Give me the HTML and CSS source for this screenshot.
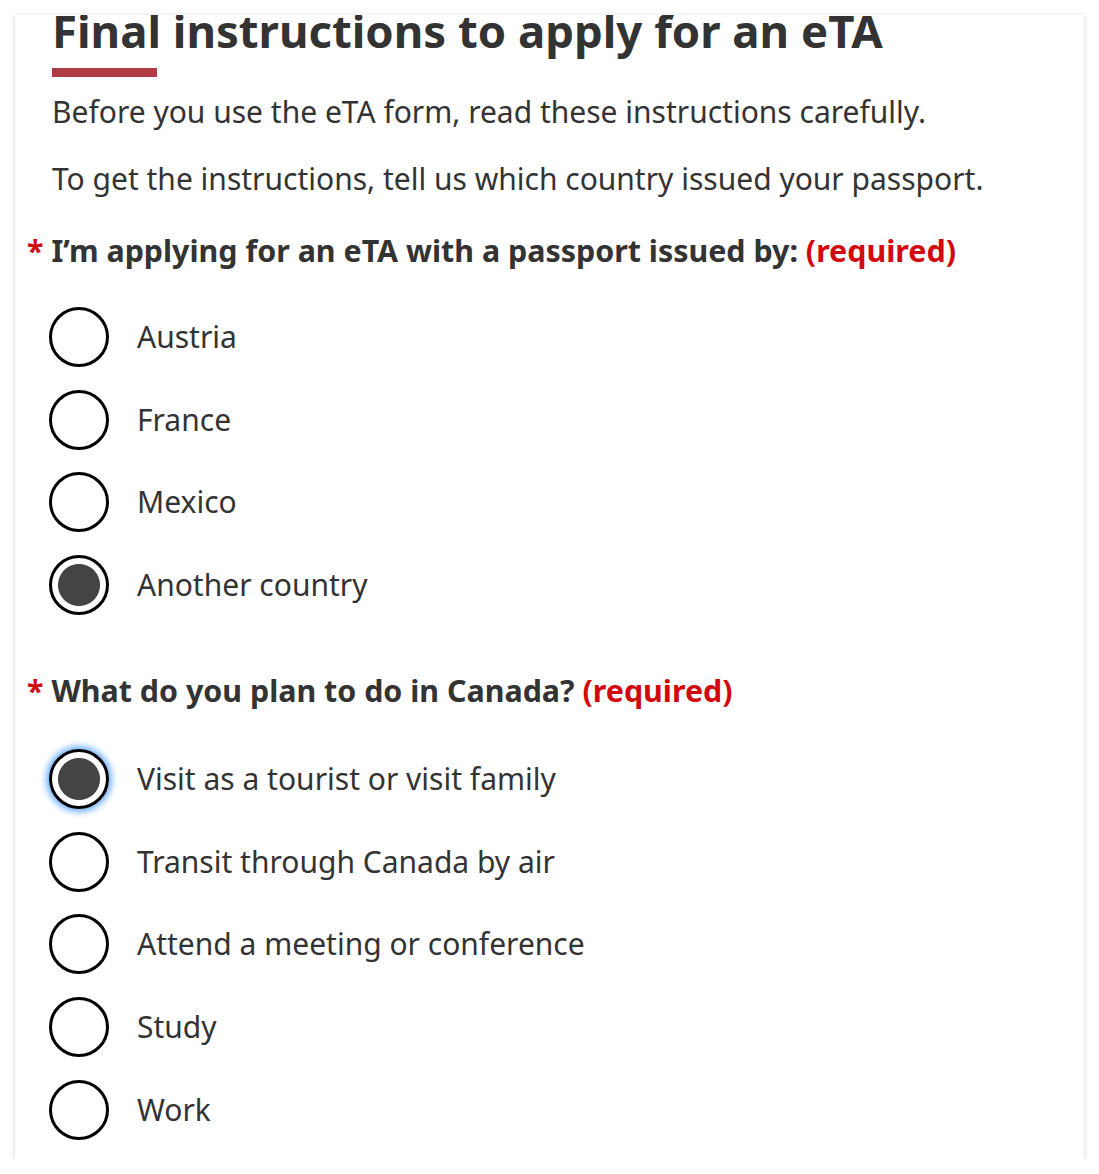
FILE: index.html
```html
<!DOCTYPE html>
<html lang="en">
<head>
<meta charset="utf-8">
<title>Final instructions to apply for an eTA</title>
<link rel="stylesheet" href="styles.css">
</head>
<body>
<main class="card">
  <h1 class="title">Final instructions to apply for an eTA</h1>
  <p class="intro">Before you use the eTA form, read these instructions carefully.</p>
  <p class="intro second">To get the instructions, tell us which country issued your passport.</p>

  <div class="group">
    <div class="question"><span class="star">*</span> I’m applying for an eTA with a passport issued by: <span class="req">(required)</span></div>
    <ul class="options">
      <li class="option"><input type="radio" name="country" id="c1"><label for="c1">Austria</label></li>
      <li class="option"><input type="radio" name="country" id="c2"><label for="c2">France</label></li>
      <li class="option"><input type="radio" name="country" id="c3"><label for="c3">Mexico</label></li>
      <li class="option"><input type="radio" name="country" id="c4" checked><label for="c4">Another country</label></li>
    </ul>
  </div>

  <div class="group second-group">
    <div class="question"><span class="star">*</span> What do you plan to do in Canada? <span class="req">(required)</span></div>
    <ul class="options">
      <li class="option"><input type="radio" name="plan" id="p1" class="focused" checked><label for="p1">Visit as a tourist or visit family</label></li>
      <li class="option"><input type="radio" name="plan" id="p2"><label for="p2">Transit through Canada by air</label></li>
      <li class="option"><input type="radio" name="plan" id="p3"><label for="p3">Attend a meeting or conference</label></li>
      <li class="option"><input type="radio" name="plan" id="p4"><label for="p4">Study</label></li>
      <li class="option"><input type="radio" name="plan" id="p5"><label for="p5">Work</label></li>
    </ul>
  </div>
</main>
</body>
</html>
```
FILE: styles.css
```css
html, body {
  margin: 0;
  padding: 0;
  background: #fff;
}
body {
  font-family: "Noto Sans", "Open Sans", sans-serif;
  color: #333;
  padding: 15px 15px 0 15px;
}
.card {
  background: #fff;
  box-shadow: 0 1px 5px rgba(0, 0, 0, 0.18);
  overflow: hidden;
  padding: 0 20px 20px 37px;
  height: 1144px;
  box-sizing: border-box;
}
.title {
  font-size: 45.5px;
  line-height: 57.6px;
  font-weight: 700;
  margin: -13.5px 0 0 0;
  color: #333;
  white-space: nowrap;
}
.title::after {
  content: "";
  display: block;
  width: 105px;
  height: 9px;
  background: #af3c43;
  margin-top: 9px;
}
.intro {
  font-size: 30px;
  line-height: 42px;
  margin: 14px 0 0 0;
}
.intro.second {
  margin-top: 25px;
}
.group {
  margin-top: 30px;
}
.second-group {
  margin-top: 55px;
}
.question {
  font-size: 30.4px;
  line-height: 42px;
  font-weight: 700;
  margin-left: -25px;
}
.star, .req {
  color: #d3080c;
}
.options {
  list-style: none;
  margin: 35px 0 0 -3px;
  padding: 0;
  display: flex;
  flex-direction: column;
  gap: 22.67px;
}
.second-group .options {
  margin-top: 37px;
}
.option {
  display: flex;
  align-items: center;
  height: 60px;
  gap: 28px;
}
.option label {
  font-size: 30px;
  line-height: 42px;
}
.option input {
  appearance: none;
  -webkit-appearance: none;
  margin: 0;
  width: 60px;
  height: 60px;
  border: 3px solid #000;
  border-radius: 50%;
  box-sizing: border-box;
  background: #fff;
  flex: none;
}
.option input:checked {
  background: radial-gradient(circle, #444 0, #444 20.5px, #fff 21.5px);
}
.option input.focused {
  box-shadow: 0 0 6px 3px rgba(60, 150, 255, 0.75);
}
```
